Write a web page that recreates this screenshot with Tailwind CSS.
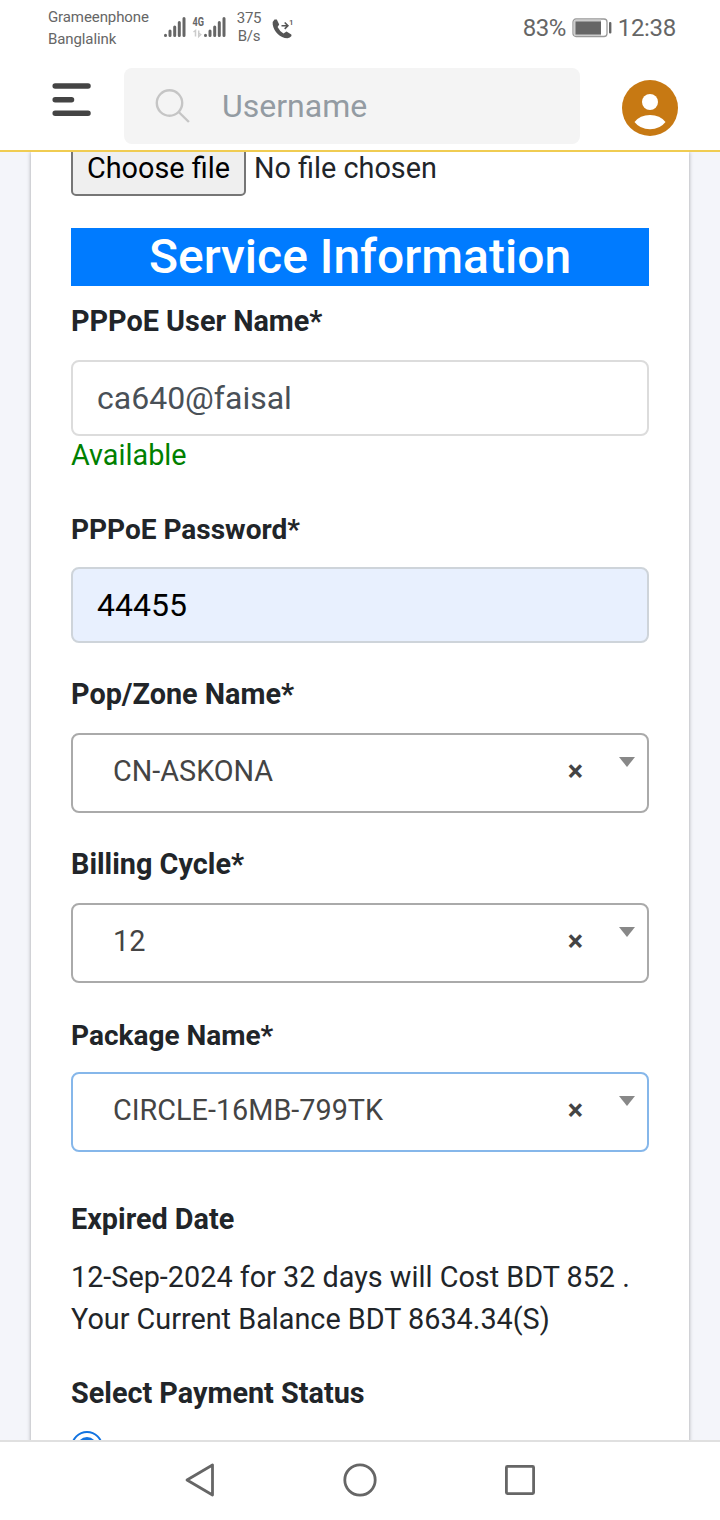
<!DOCTYPE html>
<html lang="en">
<head>
  <meta charset="UTF-8" />
  <meta name="viewport" content="width=device-width, initial-scale=1.0"/>
  <title>Service Information</title>
  <script src="https://cdn.jsdelivr.net/npm/@tailwindcss/browser@4"></script>
</head>
<body class="w-[720px] h-[1520px] overflow-hidden flex flex-col bg-white text-[#212529] font-['Roboto',sans-serif] text-[28.8px] leading-[42px]">
  <!-- status bar -->
  <div class="h-[60px] shrink-0 flex items-start text-[#666] pl-12 pr-[44px]">
    <div class="w-[116px] pt-[6px] text-[15px] leading-[22px] tracking-[-0.1px]">
      <div>Grameenphone</div>
      <div>Banglalink</div>
    </div>
    <svg class="w-[62px] h-[60px] shrink-0" viewBox="164 0 62 60">
      <g stroke="#666" stroke-width="3" stroke-linecap="round">
        <path d="M165.5 35.3v.2M170 31v4.5M174.7 27v8.5M179.3 22.5v13M184 18.5v17" />
        <path d="M205.5 35.3v.2M210 31v4.5M214.7 27v8.5M219.3 22.5v13M224 18.5v17" />
      </g>
      <text x="192.5" y="25.7" font-size="12.5" font-weight="700" fill="#666" textLength="11.5" lengthAdjust="spacingAndGlyphs">4G</text>
      <path d="M193.5 32l2-1.5v6M198.7 30.5v6l2-2-2-1.5" fill="none" stroke="#ccc" stroke-width="1.5" />
    </svg>
    <div class="w-[46px] pt-[9px] text-center text-[15px] leading-[18px] tracking-[-0.3px]">
      <div>375</div>
      <div>B/s</div>
    </div>
    <svg class="-ml-[2px] w-[24px] h-[60px] shrink-0" viewBox="270 0 24 60">
      <path d="M274.5 19.5Q272.5 21 272.7 24.5C274 32 280 38 287.5 38.3Q290 38 291.5 36L291.3 34.5L286.5 31.5L283.5 33.5Q279.5 31 277.6 27L279.2 24.5L276.8 19.5Z" fill="#555" />
      <path d="M281.5 25.7h6M284.7 22.5l3.2 3.2-3.2 3.2" fill="none" stroke="#555" stroke-width="1.6" />
      <text x="289" y="25" font-size="8" font-weight="500" fill="#555">1</text>
    </svg>
    <div class="ml-auto flex items-center h-[56px] text-[24px] leading-[56px]">
      <span class="w-[49px] tracking-[-0.5px]">83%</span>
      <svg class="w-[40px] h-[20px]" viewBox="0 0 40 20">
        <rect x="1" y="1" width="34" height="17.5" rx="3" fill="#fff" stroke="#999" stroke-width="1.3" />
        <path d="M2 3q0-1.5 1.5-1.5H29v16.5H3.5Q2 17.5 2 16z" fill="#ccc" />
        <rect x="3.5" y="3.5" width="25.5" height="13" fill="#666" />
        <rect x="37" y="4" width="2.4" height="11.5" rx="1" fill="#666" />
      </svg>
      <span class="ml-[6px] tracking-[-0.3px]">12:38</span>
    </div>
  </div>

  <!-- top bar -->
  <header class="h-[92px] shrink-0 flex items-start border-b-2 border-[#f0cc52]">
    <svg class="ml-[52px] mt-[22px] w-[40px] h-[36px]" viewBox="0 0 40 36" stroke="#444" stroke-width="5.5" stroke-linecap="round">
      <path d="M3.2 3.9H36M3.2 17.7H19.5M3.2 31.3H36" />
    </svg>
    <div class="ml-[32px] mt-2 w-[456px] h-[76px] rounded-lg bg-[#f4f4f4] flex items-center">
      <svg class="ml-[30px] w-[38px] h-[38px]" viewBox="0 0 38 38" fill="none" stroke="#c5c5c5" stroke-width="2.4">
        <circle cx="15.5" cy="16" r="12.7" />
        <path d="M24.7 25l10.2 10" />
      </svg>
      <span class="ml-[30px] text-[32px] text-[#939ba2]">Username</span>
    </div>
    <svg class="ml-[42px] mt-5 w-14 h-14" viewBox="0 0 56 56">
      <circle cx="28" cy="28" r="28" fill="#c77913" />
      <circle cx="28" cy="22" r="8" fill="#fff" />
      <path d="M12.5 42Q18 35 28 35T43.5 42Q38 49.2 28 49.2T12.5 42Z" fill="#fff" />
    </svg>
  </header>

  <main class="h-[1288px] shrink-0 overflow-hidden bg-[#f4f5fa] px-[31px]">
    <div class="h-[1400px] bg-white px-10 shadow-[0_0_4px_rgba(0,0,0,0.35)]">
      <div class="flex">
        <div class="-mt-3 h-[56px] w-[175px] flex items-center justify-center border-2 border-[#767676] rounded-[5px] bg-[#efefef] text-black">Choose file</div>
        <div class="-mt-3 h-[56px] ml-2 flex items-center">No file chosen</div>
      </div>
      <h2 class="mt-8 h-[58px] leading-[57px] bg-[#007bff] text-white text-center text-[48px] font-medium">Service Information</h2>

      <div class="mt-[14px] font-bold">PPPoE User Name*</div>
      <div class="mt-[18px] h-[76px] flex items-center border-2 border-[#dcdcdc] rounded-lg px-6 text-[32px] text-[#495057]">ca640@faisal</div>
      <div class="-mt-[2px] text-[#008000]">Available</div>

      <div class="mt-[33px] font-bold text-[28px]">PPPoE Password*</div>
      <div class="mt-4 h-[76px] flex items-center border-2 border-[#ced4da] rounded-lg bg-[#e8f0fe] px-6 text-[32px] text-black">44455</div>

      <div class="mt-[30px] font-bold">Pop/Zone Name*</div>
      <div class="mt-[18px] h-[80px] flex border-2 border-[#aaa] rounded-lg pl-10 pr-3 text-[#444]">
        <span class="pt-[15px] grow">CN-ASKONA</span>
        <b class="pt-[15px] mr-[36px]">×</b>
        <svg class="mt-[22px] w-4 h-[10px]" viewBox="0 0 16 10"><path d="M0 0h16L8 10z" fill="#888" /></svg>
      </div>

      <div class="mt-[30px] font-bold">Billing Cycle*</div>
      <div class="mt-[18px] h-[80px] flex border-2 border-[#aaa] rounded-lg pl-10 pr-3 text-[#444]">
        <span class="pt-[15px] grow">12</span>
        <b class="pt-[15px] mr-[36px]">×</b>
        <svg class="mt-[22px] w-4 h-[10px]" viewBox="0 0 16 10"><path d="M0 0h16L8 10z" fill="#888" /></svg>
      </div>

      <div class="mt-[32px] font-bold text-[28px]">Package Name*</div>
      <div class="mt-[15px] h-[80px] flex border-2 border-[#86b7ea] rounded-lg pl-10 pr-3 text-[#444]">
        <span class="pt-[15px] grow">CIRCLE-16MB-799TK</span>
        <b class="pt-[15px] mr-[36px]">×</b>
        <svg class="mt-[22px] w-4 h-[10px]" viewBox="0 0 16 10"><path d="M0 0h16L8 10z" fill="#888" /></svg>
      </div>

      <div class="mt-[46px] font-bold">Expired Date</div>
      <p class="mt-4">12-Sep-2024 for 32 days will Cost BDT 852 .<br />Your Current Balance BDT 8634.34(S)</p>
      <div class="mt-8 font-bold">Select Payment Status</div>
      <div class="mt-[17px] w-8 h-8 rounded-full border-2 border-[#1273e0] p-1">
        <div class="w-full h-full rounded-full bg-[#1273e0]"></div>
      </div>
    </div>
  </main>

  <!-- system navigation -->
  <nav class="h-[80px] shrink-0 border-t-2 border-[#e0e0e0]">
    <svg class="w-[720px] h-[78px]" viewBox="0 1442 720 78" fill="none" stroke="#666" stroke-width="2.8" stroke-linejoin="round">
      <path d="M212.5 1465v30L187 1480z" />
      <circle cx="360" cy="1480" r="15.2" />
      <rect x="506.4" y="1466.4" width="27.2" height="27.2" rx="1" />
    </svg>
  </nav>
</body>
</html>
